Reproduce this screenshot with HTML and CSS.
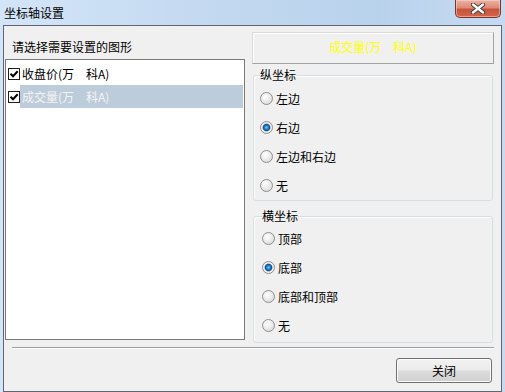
FILE: index.html
```html
<!DOCTYPE html>
<html lang="zh-CN">
<head>
<meta charset="utf-8">
<title>坐标轴设置</title>
<link rel="stylesheet" href="styles.css">
</head>
<body>
<div class="window">
  <div class="titlebar">
    <span class="title">坐标轴设置</span>
    <div class="close">
      <svg width="16" height="11" viewBox="0 0 16 11">
        <path d="M3 1.5 L13 9.5 M13 1.5 L3 9.5" stroke="#3a3a3a" stroke-width="4.2" stroke-linecap="round"/>
        <path d="M3 1.5 L13 9.5 M13 1.5 L3 9.5" stroke="#ffffff" stroke-width="2.4" stroke-linecap="round"/>
      </svg>
    </div>
  </div>
  <div class="client">
    <div class="main">
      <div class="leftcol">
        <div class="prompt">请选择需要设置的图形</div>
        <div class="listbox">
          <div class="item">
            <span class="check"><svg width="10" height="10" viewBox="0 0 10 10"><path d="M1.5 4.8 L4 7.3 L8.7 2.2" fill="none" stroke="#000" stroke-width="2"/></svg></span>
            <span class="itext">收盘价(万　科A)</span>
          </div>
          <div class="item selected">
            <span class="check"><svg width="10" height="10" viewBox="0 0 10 10"><path d="M1.5 4.8 L4 7.3 L8.7 2.2" fill="none" stroke="#000" stroke-width="2"/></svg></span>
            <span class="itext">成交量(万　科A)</span>
          </div>
        </div>
      </div>
      <div class="rightcol">
        <div class="header">成交量(万　科A)</div>
        <fieldset class="group g1">
          <legend>纵坐标</legend>
          <div class="opt"><span class="radio"></span>左边</div>
          <div class="opt"><span class="radio on"></span>右边</div>
          <div class="opt"><span class="radio"></span>左边和右边</div>
          <div class="opt"><span class="radio"></span>无</div>
        </fieldset>
        <fieldset class="group g2">
          <legend>横坐标</legend>
          <div class="opt"><span class="radio"></span>顶部</div>
          <div class="opt"><span class="radio on"></span>底部</div>
          <div class="opt"><span class="radio"></span>底部和顶部</div>
          <div class="opt"><span class="radio"></span>无</div>
        </fieldset>
      </div>
    </div>
    <div class="sep"></div>
    <div class="footer">
      <button class="btn">关闭</button>
    </div>
  </div>
</div>
</body>
</html>
```
FILE: styles.css
```css
* { box-sizing: border-box; }
html, body {
  margin: 0;
  padding: 0;
  width: 505px;
  height: 392px;
  overflow: hidden;
  background: #c3d9f0;
  font-family: "Noto Sans CJK SC", "Liberation Sans", sans-serif;
  font-size: 12px;
  line-height: 16px;
  color: #000;
}
.window {
  width: 505px;
  height: 392px;
  display: flex;
  flex-direction: column;
  background: linear-gradient(to right, #d3e5f8 0%, #c2d8f0 45%, #b9d2ec 75%, #c6dbf2 100%);
}
.titlebar {
  height: 25px;
  display: flex;
  align-items: flex-start;
  flex: none;
}
.title {
  margin: 5px 0 0 4px;
  line-height: 16px;
  font-size: 12px;
  color: #000;
}
.close {
  margin-left: auto;
  margin-right: 4px;
  width: 46px;
  height: 18px;
  border: 1px solid #7d3427;
  border-top: none;
  border-radius: 0 0 5px 5px;
  background: linear-gradient(to bottom, #eab3a5 0%, #de8a76 45%, #c9533b 55%, #d1664e 100%);
  box-shadow: inset 0 0 0 1px rgba(255, 220, 210, 0.5);
  display: flex;
  align-items: center;
  justify-content: center;
}
.client {
  margin: 0 3px 0 3px;
  height: 367px;
  border: 1px solid #5d6672;
  background: #f0f0f0;
  display: flex;
  flex-direction: column;
}
.main {
  display: flex;
  gap: 7px;
  padding: 6px 7px 0 1px;
}
.leftcol {
  width: 240px;
  display: flex;
  flex-direction: column;
}
.prompt {
  margin: 7px 0 4px 7px;
  line-height: 16px;
}
.listbox {
  height: 281px;
  background: #fff;
  border: 1px solid #7a7a7a;
  padding: 2px 1px 0 2px;
}
.item {
  height: 23px;
  display: flex;
  align-items: center;
}
.check {
  width: 12px;
  height: 12px;
  border: 1px solid #1f1f1f;
  background: #fff;
  margin-left: 0;
  flex: none;
  display: flex;
  align-items: center;
  justify-content: center;
}
.itext {
  flex: 1;
  height: 23px;
  line-height: 23px;
  padding-left: 2px;
}
.item.selected .itext {
  background: #bdccda;
  color: #f4f4f4;
}
.rightcol {
  width: 242px;
  display: flex;
  flex-direction: column;
}
.header {
  height: 32px;
  border: 1px solid;
  border-color: #d9d9d9 #a3a3a3 #a3a3a3 #d9d9d9;
  box-shadow: inset 1px 1px 0 #fff;
  color: #ffff00;
  text-align: center;
  line-height: 28px;
}
.group {
  margin: 3px 1px 0 1px;
  padding: 1px 4px 0 6px;
  border: 1px solid #d5dfe5;
  border-radius: 3px;
  box-shadow: inset 1px 1px 0 #fff;
  min-width: 0;
}
.group legend {
  padding: 0;
  line-height: 16px;
}
.g2 {
  margin-top: 7px;
  padding: 0 4px 2px 8px;
}
.opt {
  height: 29px;
  display: flex;
  align-items: center;
  gap: 3px;
}
.radio {
  width: 13px;
  height: 13px;
  border-radius: 50%;
  border: 1px solid #8d8f91;
  background: radial-gradient(circle at 40% 35%, #ffffff 0%, #ececec 45%, #d2d2d2 100%);
  flex: none;
}
.radio.on {
  background: radial-gradient(circle at 50% 50%, #7fd0f7 0px, #2a8ad2 1.6px, #0e4f8e 3.3px, #8aa4bd 3.8px, #f4f4f4 4.4px, #dedede 100%);
}
.sep {
  margin: 4px 7px 0 8px;
  height: 2px;
  border-top: 1px solid #a0a0a0;
  border-bottom: 1px solid #ffffff;
  flex: none;
}
.footer {
  display: flex;
  justify-content: flex-end;
  padding: 9px 9px 0 0;
}
.btn {
  width: 96px;
  height: 25px;
  border: 1px solid #707070;
  border-radius: 3px;
  background: linear-gradient(to bottom, #f2f2f2 0%, #ebebeb 48%, #dddddd 52%, #cfcfcf 100%);
  box-shadow: inset 0 0 0 1px #fcfcfc;
  font-family: "Noto Sans CJK SC", "Liberation Sans", sans-serif;
  font-size: 12px;
  line-height: 16px;
  color: #000;
  padding: 0;
}
```
